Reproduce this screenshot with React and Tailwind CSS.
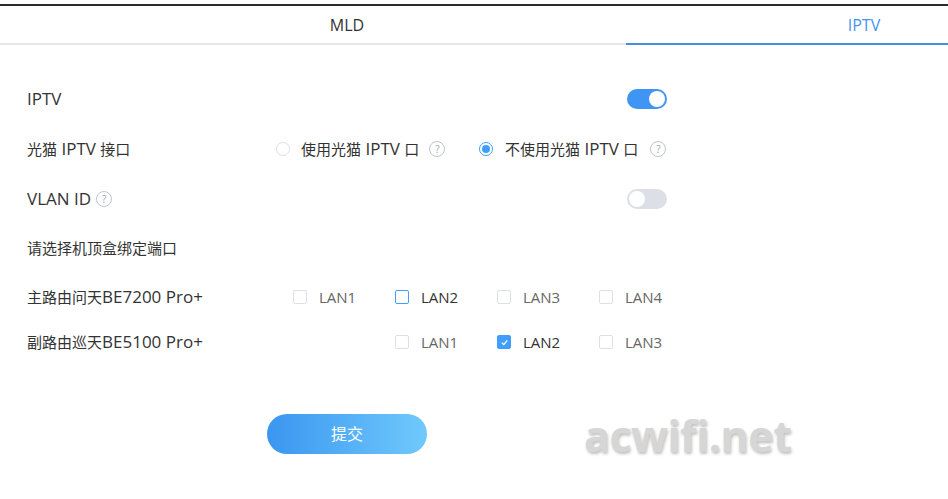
import React, { useState } from "react";

const font = { fontFamily: '"Open Sans", "Noto Sans CJK SC", sans-serif' };

// latin runs render larger than the CJK ones, like YaHei does
const T = ({ children }) =>
  children.split(/([\u4e00-\u9fff]+)/).map((part, i) =>
    /[\u4e00-\u9fff]/.test(part) ? (
      <span key={i}>{part}</span>
    ) : (
      <span key={i} className="text-[17px]">
        {part}
      </span>
    )
  );

const Help = ({ className = "ml-[5px]" }) => (
  <span
    className={`inline-flex items-center justify-center w-[16px] h-[16px] rounded-full border border-[#c0c4cc] text-[10px] leading-none text-[#a0a4ab] ${className}`}
  >
    ?
  </span>
);

const Toggle = ({ on }) => (
  <div className={`relative w-[40px] h-[20px] rounded-full ${on ? "bg-[#3f95f4]" : "bg-[#dcdfe6]"}`}>
    <div className={`absolute top-[2px] w-[16px] h-[16px] rounded-full bg-white ${on ? "left-[22px]" : "left-[2px]"}`} />
  </div>
);

const Radio = ({ checked }) => (
  <span
    className={`inline-flex items-center justify-center w-[14px] h-[14px] rounded-full border ${
      checked ? "border-[#409eff]" : "border-[#dcdfe6]"
    }`}
  >
    {checked && <span className="w-[8px] h-[8px] rounded-full bg-[#409eff]" />}
  </span>
);

const Check = ({ state, label }) => (
  <div className="flex items-center w-[102px]">
    <span
      className={`inline-flex items-center justify-center w-[14px] h-[14px] rounded-[2px] border ${
        state === "checked"
          ? "border-[#409eff] bg-[#409eff]"
          : state === "hover"
          ? "border-[#409eff] bg-white"
          : "border-[#dcdfe6] bg-white"
      }`}
    >
      {state === "checked" && (
        <svg width="9" height="9" viewBox="0 0 10 10">
          <path d="M2 5.2 L4.2 7.3 L8 2.8" fill="none" stroke="white" strokeWidth="1.4" />
        </svg>
      )}
    </span>
    <span className={`ml-[12px] text-[15px] ${state === "none" ? "text-[#666]" : "text-[#333]"}`}>{label}</span>
  </div>
);

export default function App() {
  const [iptv] = useState(true);

  return (
    <div className="relative w-[948px] h-[499px] bg-white overflow-hidden text-[#333]" style={font}>
      {/* top line */}
      <div className="h-[4px]" />
      <div className="border-t-2 border-[#2b2b2b]" />

      {/* tabs */}
      <div className="flex h-[39px]">
        <div className="w-[626px] flex items-center justify-center pl-[68px] text-[16px] text-[#333] border-b-2 border-[#e6e6e6]">
          MLD
        </div>
        <div className="flex-1 flex items-center justify-center pl-[154px] text-[16px] text-[#3f95f4] border-b-2 border-[#4a8fd6]">
          IPTV
        </div>
      </div>

      <div className="pl-[27px] pt-[29px] text-[15px]">
        {/* IPTV toggle */}
        <div className="h-[50px] w-[640px] flex items-center justify-between">
          <span><T>IPTV</T></span>
          <Toggle on={iptv} />
        </div>

        {/* ONT port */}
        <div className="h-[50px] flex items-center">
          <span className="w-[249px]"><T>光猫 IPTV 接口</T></span>
          <div className="w-[203px] flex items-center">
            <Radio />
            <span className="ml-[11px]"><T>使用光猫 IPTV 口</T></span>
            <Help className="ml-[10px]" />
          </div>
          <div className="flex items-center">
            <Radio checked />
            <span className="ml-[12px]"><T>不使用光猫 IPTV 口</T></span>
            <Help className="ml-[12px]" />
          </div>
        </div>

        {/* VLAN */}
        <div className="h-[50px] w-[640px] flex items-center justify-between">
          <span className="flex items-center">
            <T>VLAN ID</T>
            <Help />
          </span>
          <Toggle on={false} />
        </div>

        <div className="h-[49px] flex items-center">请选择机顶盒绑定端口</div>

        <div className="h-[48px] flex items-center">
          <span className="w-[266px]"><T>主路由问天BE7200 Pro+</T></span>
          <Check state="none" label="LAN1" />
          <Check state="hover" label="LAN2" />
          <Check state="none" label="LAN3" />
          <Check state="none" label="LAN4" />
        </div>

        <div className="h-[42px] flex items-center">
          <span className="w-[368px]"><T>副路由巡天BE5100 Pro+</T></span>
          <Check state="none" label="LAN1" />
          <Check state="checked" label="LAN2" />
          <Check state="none" label="LAN3" />
        </div>

        <div className="pt-[51px] pl-[240px]">
          <button className="w-[160px] h-[40px] rounded-full bg-gradient-to-r from-[#3a96f0] to-[#70c9fc] text-white text-[16px]">
            提交
          </button>
        </div>
      </div>

      {/* watermark */}
      <div
        className="absolute left-[584px] top-[404px] text-[43px] font-bold text-[#d6d6d6] tracking-[-0.5px]"
        style={{ fontFamily: '"Open Sans", sans-serif', textShadow: "1px 2px 3px rgba(0,0,0,0.25)" }}
      >
        acwifi.net
      </div>
    </div>
  );
}
